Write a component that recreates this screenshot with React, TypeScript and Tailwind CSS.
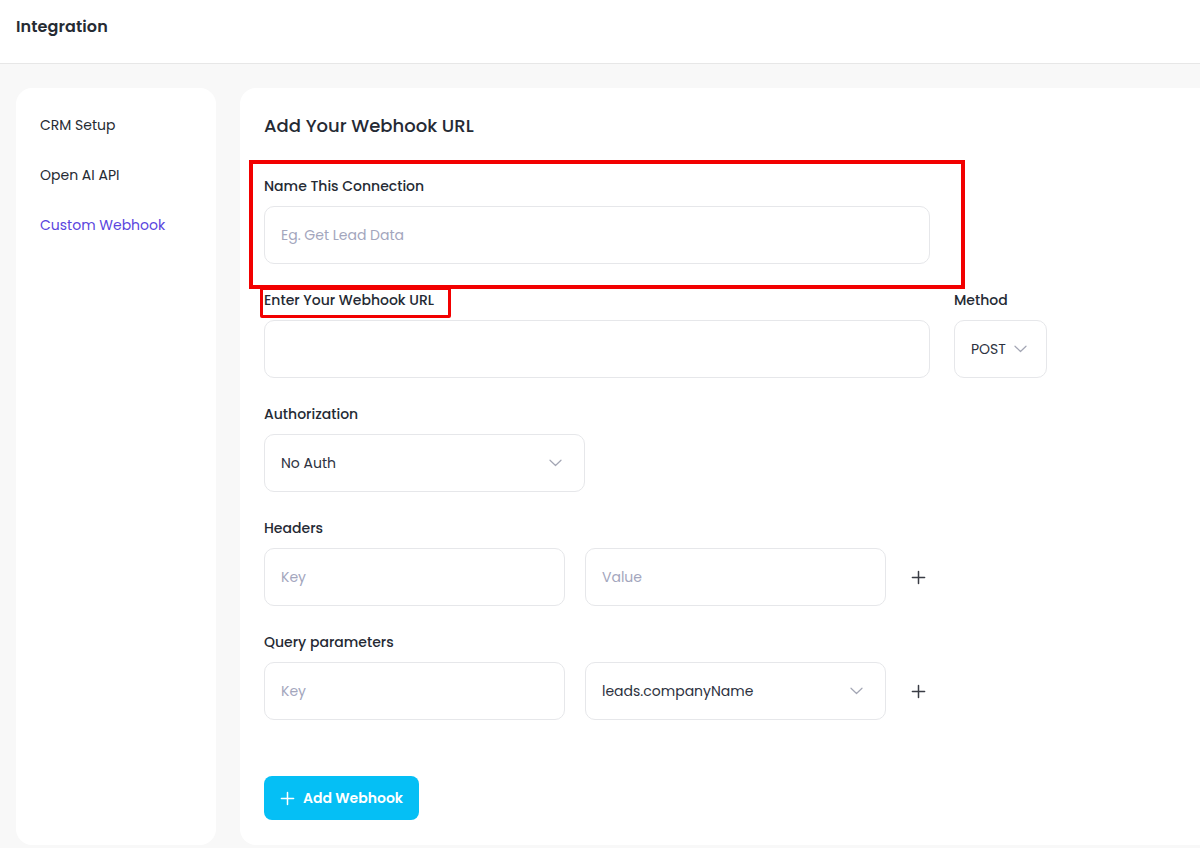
import React from "react";

const Chevron = ({ className = "" }: { className?: string }) => (
  <svg width="13" height="8" viewBox="0 0 13 8" fill="none" className={className}>
    <path d="M1 1.2L6.5 6.5L12 1.2" stroke="#a3a6b4" strokeWidth="1.2" strokeLinecap="round" strokeLinejoin="round" />
  </svg>
);

const Plus = ({ color = "#3a3d45", size = 15, w = 1.6 }: { color?: string; size?: number; w?: number }) => (
  <svg width={size} height={size} viewBox="0 0 16 16" fill="none">
    <path d="M8 1.5V14.5M1.5 8H14.5" stroke={color} strokeWidth={w} strokeLinecap="round" />
  </svg>
);

const Label = ({ children }: { children: React.ReactNode }) => (
  <div className="h-5 leading-5 text-[14px] font-medium text-[#252a34]">{children}</div>
);

const boxCls = "h-[58px] rounded-[10px] border border-[#e6e7ea] bg-white flex items-center px-4 text-[14px]";

export default function App() {
  return (
    <div
      className="w-[1200px] h-[848px] overflow-hidden bg-[#f8f8f8] relative"
      style={{ fontFamily: "Poppins, Inter, 'Open Sans', sans-serif" }}
    >
      <header className="h-[64px] bg-white border-b border-[#e7e7e7] px-4 pt-[15px]">
        <h1 className="h-6 leading-6 text-[16px] font-semibold text-[#262b33] tracking-[0.1px]">Integration</h1>
      </header>

      <div className="flex gap-6 pl-4 pt-6">
        <aside className="w-[200px] h-[757px] shrink-0 bg-white rounded-2xl pt-[27px] pl-6 flex flex-col gap-[30px]">
          <div className="h-5 leading-5 text-[14px] text-[#262b33]">CRM Setup</div>
          <div className="h-5 leading-5 text-[14px] text-[#262b33]">Open AI API</div>
          <div className="h-5 leading-5 text-[14px] text-[#5a45de]">Custom Webhook</div>
        </aside>

        <main className="w-[1000px] h-[757px] shrink-0 bg-white rounded-2xl pl-6 pt-6">
          <h2 className="h-7 leading-7 text-[18px] font-medium text-[#252a34]">Add Your Webhook URL</h2>

          <div className="mt-9 flex flex-col gap-[26px]">
            <div className="flex flex-col gap-[10px] w-[666px]">
              <Label>Name This Connection</Label>
              <div className={boxCls}>
                <span className="text-[#a3a6bd]">Eg. Get Lead Data</span>
              </div>
            </div>

            <div className="flex gap-6">
              <div className="flex flex-col gap-[10px] w-[666px]">
                <Label>Enter Your Webhook URL</Label>
                <div className={boxCls}></div>
              </div>
              <div className="flex flex-col gap-[10px] w-[93px]">
                <Label>Method</Label>
                <div className={boxCls + " gap-2"}>
                  <span className="text-[#2d3240]">POST</span>
                  <Chevron />
                </div>
              </div>
            </div>

            <div className="flex flex-col gap-[10px] w-[321px]">
              <Label>Authorization</Label>
              <div className={boxCls + " justify-between pr-[22px]"}>
                <span className="text-[#2d3240]">No Auth</span>
                <Chevron />
              </div>
            </div>

            <div className="flex flex-col gap-[10px]">
              <Label>Headers</Label>
              <div className="flex items-center gap-5">
                <div className={boxCls + " w-[301px]"}>
                  <span className="text-[#a3a6bd]">Key</span>
                </div>
                <div className={boxCls + " w-[301px]"}>
                  <span className="text-[#a3a6bd]">Value</span>
                </div>
                <div className="ml-[5px] flex items-center">
                  <Plus />
                </div>
              </div>
            </div>

            <div className="flex flex-col gap-[10px]">
              <Label>Query parameters</Label>
              <div className="flex items-center gap-5">
                <div className={boxCls + " w-[301px]"}>
                  <span className="text-[#a3a6bd]">Key</span>
                </div>
                <div className={boxCls + " w-[301px] justify-between pr-[22px]"}>
                  <span className="text-[#2d3240]">leads.companyName</span>
                  <Chevron />
                </div>
                <div className="ml-[5px] flex items-center">
                  <Plus />
                </div>
              </div>
            </div>
          </div>

          <button className="mt-14 h-[44px] w-[155px] rounded-lg bg-[#05bff5] flex items-center justify-center gap-2 text-white text-[14px] font-semibold">
            <Plus color="#ffffff" size={15} w={1.6} />
            <span>Add Webhook</span>
          </button>
        </main>
      </div>

      {/* annotation overlays */}
      <div className="absolute left-[249px] top-[160px] w-[716px] h-[129px] border-[4px] border-[#f20000] pointer-events-none" />
      <div className="absolute left-[260px] top-[287px] w-[191px] h-[31px] border-[3px] border-[#f20000] rounded-[2px] pointer-events-none" />
    </div>
  );
}
